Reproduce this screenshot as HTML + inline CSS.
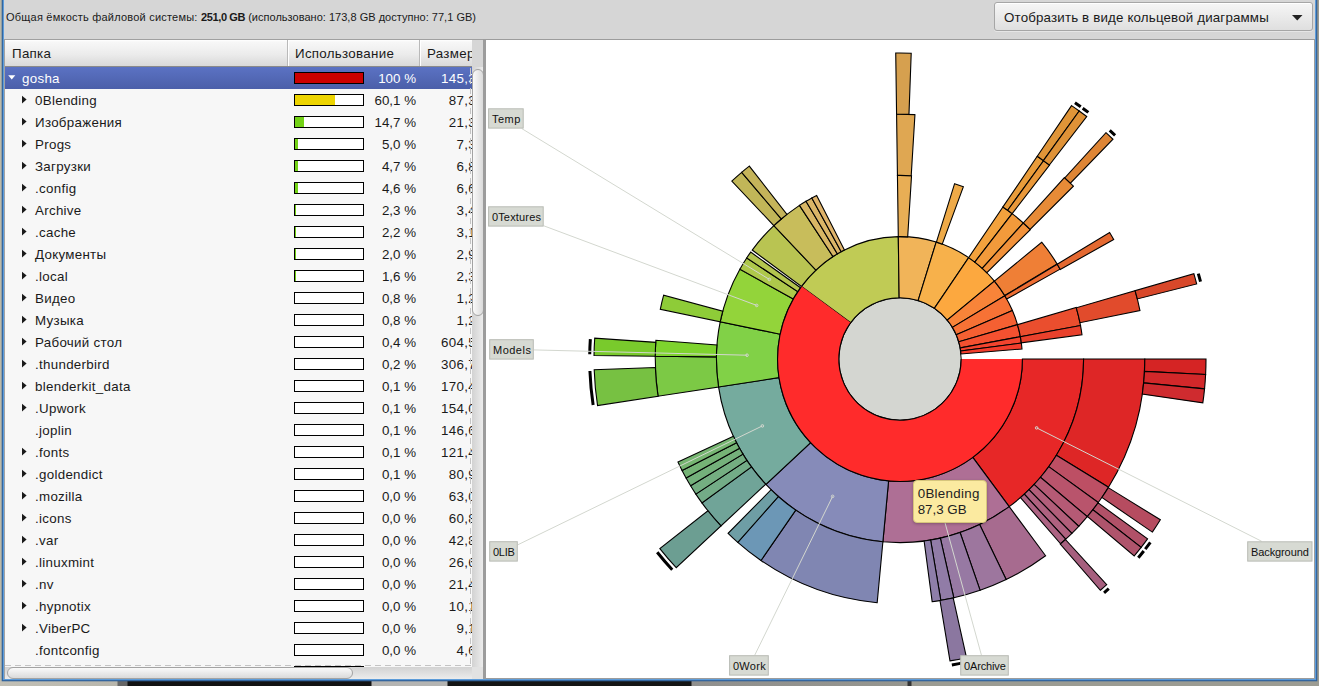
<!DOCTYPE html>
<html><head><meta charset="utf-8"><title>Анализатор использования дисков</title>
<style>
html,body{margin:0;padding:0}
body{width:1319px;height:686px;overflow:hidden;position:relative;background:#d6d6d6;font-family:"Liberation Sans","DejaVu Sans",sans-serif;color:#1a1a1a}
.abs{position:absolute}
#desk{left:0;top:0;width:1319px;height:686px;background:#bdbaa9}
#frame{left:4.3px;top:-3px;width:1310.7px;height:681.5px;background:#d6d6d6;box-shadow:0 0 0 1.1px #5d9cd9,0 0 0 2.3px #2f609a}
#toptxt{left:6px;top:11px;font-size:11px;letter-spacing:.07px;white-space:nowrap;line-height:13px}
#btn{left:994px;top:2px;width:317px;height:27px;border:1px solid #a6a6a6;border-radius:3px;background:linear-gradient(#f6f6f6,#dfdfdf);box-shadow:inset 0 1px 0 #fff,0 1px 0 rgba(255,255,255,.4)}
#btn span{position:absolute;left:9px;top:7px;font-size:13.33px;letter-spacing:.16px;white-space:nowrap;line-height:16px}
#tree{left:5px;top:40px;width:467px;height:627px;background:#f7f7f7;overflow:hidden}
#hdr{left:0;top:0;width:467px;height:27.3px;background:linear-gradient(#fff 0,#f7f7f7 2px,#ececec 14px,#d9d9d9 26px);border-bottom:1.3px solid #8a8a8a;box-sizing:border-box;z-index:2;font-size:13.33px;letter-spacing:.3px}
#hdr span{position:absolute;top:6px;line-height:16px;white-space:nowrap}
#hdr i{position:absolute;top:0;width:1px;height:26px;background:#b9b9b9;box-shadow:1px 0 0 #fff}
.row{position:absolute;left:0;width:467px;height:22px;font-size:13.33px;letter-spacing:.3px;line-height:22px;white-space:nowrap}
.row.sel{background:linear-gradient(#5b72c3,#4b5fa9);color:#fff}
.row .nm{position:absolute;top:1px}
.row .ar{position:absolute}
.row .bar{position:absolute;left:289px;top:5px;width:68px;height:10px;border:1px solid #000;background:#fff}
.row .bar i{position:absolute;left:0;top:0;height:10px;display:block}
.row .pc{position:absolute;right:56px;top:1px;letter-spacing:0}
.row .sz{position:absolute;right:-4px;top:1px;letter-spacing:.35px}
#vs{left:472px;top:67px;width:11.2px;height:600px;background:linear-gradient(90deg,#d2d2d2,#ececec)}
#vsl{left:472px;top:69px;width:10px;height:245px;border:1px solid #a3a3a3;border-radius:6px;background:linear-gradient(90deg,#fafafa,#dadada)}
#hs{left:5px;top:667px;width:467px;height:12px;background:linear-gradient(#d2d2d2,#ececec)}
#cor{left:472px;top:667px;width:11.2px;height:12px;background:#e2e2e2}
#hsl{left:7px;top:667px;width:344px;height:10px;border:1px solid #a3a3a3;border-radius:6px;background:linear-gradient(#fafafa,#dadada)}
#chart{left:483.2px;top:39px;width:831.8px;height:639.5px;background:#9c9c9c}
#chart i{position:absolute;left:2.5px;top:1px;right:1px;bottom:1px;background:#fff}
svg text{font-family:"Liberation Sans","DejaVu Sans",sans-serif;font-size:11px;fill:#111}
#tip{left:912.7px;top:479.5px;width:72px;height:41px;background:#fbeaa0;border:1px solid #d6c57c;border-radius:4px;font-size:13.33px;line-height:16px;letter-spacing:.3px;box-shadow:0 1px 3px rgba(0,0,0,.25)}
#tip div{position:absolute;left:4px;white-space:nowrap;color:#222}
</style></head><body>
<div id="desk" class="abs"></div>
<div class="abs" style="left:1317px;top:0;width:2px;height:686px;background:#9c9a8e"></div>
<div class="abs" style="left:0;top:681px;width:1319px;height:5px;background:linear-gradient(90deg,#c2c0b6 0,#b8b6ac 117px,#666 118px,#666 127px,#121212 128px,#121212 371px,#b4b4b2 372px,#b4b4b2 447px,#151515 448px,#151515 691px,#90908e 692px,#96968f 907px,#333 908px,#333 911px,#9c9c93 912px)"></div>
<div id="frame" class="abs"></div>
<div id="toptxt" class="abs"><span style="letter-spacing:.22px">Общая ёмкость файловой системы: </span><b style="letter-spacing:-.36px">251,0 GB</b><span style="letter-spacing:.02px"> (использовано: 173,8 GB доступно: 77,1 GB)</span></div>
<div id="btn" class="abs"><span>Отобразить в виде кольцевой диаграммы</span><svg class="abs" style="left:297px;top:12px" width="11" height="6"><path d="M0 0H10.5L5.25 5.5Z" fill="#222"/></svg></div>
<div class="abs" style="left:4.3px;top:39px;width:1310.7px;height:1px;background:#a0a0a0"></div>
<div class="abs" style="left:4.3px;top:40px;width:.8px;height:638.5px;background:#a2a2a2"></div>
<div id="tree" class="abs">
<div id="hdr" class="abs"><span style="left:7px">Папка</span><i style="left:282px"></i><span style="left:290px">Использование</span><i style="left:414px"></i><span style="left:422px">Размер</span></div>
<div class="row sel" style="top:27px"><svg class="ar" style="left:3px;top:8px" width="8" height="5"><path d="M0.2 0.3H7.3L3.75 4.4Z" fill="#fff"/></svg><span class="nm" style="left:17px">gosha</span><div class="bar"><i style="width:68px;background:#cc0000"></i></div><span class="pc">100 %</span><span class="sz">145,3</span></div>
<div class="row" style="top:49px"><svg class="ar" style="left:17px;top:6px" width="6" height="9"><path d="M0 0.7V8.4L4.6 4.55Z" fill="#1a1a1a"/></svg><span class="nm" style="left:30px">0Blending</span><div class="bar"><i style="width:40px;background:#edd400"></i></div><span class="pc">60,1 %</span><span class="sz">87,3</span></div>
<div class="row" style="top:71px"><svg class="ar" style="left:17px;top:6px" width="6" height="9"><path d="M0 0.7V8.4L4.6 4.55Z" fill="#1a1a1a"/></svg><span class="nm" style="left:30px">Изображения</span><div class="bar"><i style="width:9px;background:#73d216"></i></div><span class="pc">14,7 %</span><span class="sz">21,3</span></div>
<div class="row" style="top:93px"><svg class="ar" style="left:17px;top:6px" width="6" height="9"><path d="M0 0.7V8.4L4.6 4.55Z" fill="#1a1a1a"/></svg><span class="nm" style="left:30px">Progs</span><div class="bar"><i style="width:3px;background:#73d216"></i></div><span class="pc">5,0 %</span><span class="sz">7,3</span></div>
<div class="row" style="top:115px"><svg class="ar" style="left:17px;top:6px" width="6" height="9"><path d="M0 0.7V8.4L4.6 4.55Z" fill="#1a1a1a"/></svg><span class="nm" style="left:30px">Загрузки</span><div class="bar"><i style="width:3px;background:#73d216"></i></div><span class="pc">4,7 %</span><span class="sz">6,8</span></div>
<div class="row" style="top:137px"><svg class="ar" style="left:17px;top:6px" width="6" height="9"><path d="M0 0.7V8.4L4.6 4.55Z" fill="#1a1a1a"/></svg><span class="nm" style="left:30px">.config</span><div class="bar"><i style="width:3px;background:#73d216"></i></div><span class="pc">4,6 %</span><span class="sz">6,6</span></div>
<div class="row" style="top:159px"><svg class="ar" style="left:17px;top:6px" width="6" height="9"><path d="M0 0.7V8.4L4.6 4.55Z" fill="#1a1a1a"/></svg><span class="nm" style="left:30px">Archive</span><div class="bar"><i style="width:1px;background:#73d216"></i></div><span class="pc">2,3 %</span><span class="sz">3,4</span></div>
<div class="row" style="top:181px"><svg class="ar" style="left:17px;top:6px" width="6" height="9"><path d="M0 0.7V8.4L4.6 4.55Z" fill="#1a1a1a"/></svg><span class="nm" style="left:30px">.cache</span><div class="bar"><i style="width:1px;background:#73d216"></i></div><span class="pc">2,2 %</span><span class="sz">3,1</span></div>
<div class="row" style="top:203px"><svg class="ar" style="left:17px;top:6px" width="6" height="9"><path d="M0 0.7V8.4L4.6 4.55Z" fill="#1a1a1a"/></svg><span class="nm" style="left:30px">Документы</span><div class="bar"><i style="width:1px;background:#73d216"></i></div><span class="pc">2,0 %</span><span class="sz">2,9</span></div>
<div class="row" style="top:225px"><svg class="ar" style="left:17px;top:6px" width="6" height="9"><path d="M0 0.7V8.4L4.6 4.55Z" fill="#1a1a1a"/></svg><span class="nm" style="left:30px">.local</span><div class="bar"><i style="width:1px;background:#73d216"></i></div><span class="pc">1,6 %</span><span class="sz">2,3</span></div>
<div class="row" style="top:247px"><svg class="ar" style="left:17px;top:6px" width="6" height="9"><path d="M0 0.7V8.4L4.6 4.55Z" fill="#1a1a1a"/></svg><span class="nm" style="left:30px">Видео</span><div class="bar"><i style="width:0px;background:#73d216"></i></div><span class="pc">0,8 %</span><span class="sz">1,2</span></div>
<div class="row" style="top:269px"><svg class="ar" style="left:17px;top:6px" width="6" height="9"><path d="M0 0.7V8.4L4.6 4.55Z" fill="#1a1a1a"/></svg><span class="nm" style="left:30px">Музыка</span><div class="bar"><i style="width:0px;background:#73d216"></i></div><span class="pc">0,8 %</span><span class="sz">1,2</span></div>
<div class="row" style="top:291px"><svg class="ar" style="left:17px;top:6px" width="6" height="9"><path d="M0 0.7V8.4L4.6 4.55Z" fill="#1a1a1a"/></svg><span class="nm" style="left:30px">Рабочий стол</span><div class="bar"><i style="width:0px;background:#73d216"></i></div><span class="pc">0,4 %</span><span class="sz">604,5</span></div>
<div class="row" style="top:313px"><svg class="ar" style="left:17px;top:6px" width="6" height="9"><path d="M0 0.7V8.4L4.6 4.55Z" fill="#1a1a1a"/></svg><span class="nm" style="left:30px">.thunderbird</span><div class="bar"><i style="width:0px;background:#73d216"></i></div><span class="pc">0,2 %</span><span class="sz">306,7</span></div>
<div class="row" style="top:335px"><svg class="ar" style="left:17px;top:6px" width="6" height="9"><path d="M0 0.7V8.4L4.6 4.55Z" fill="#1a1a1a"/></svg><span class="nm" style="left:30px">blenderkit_data</span><div class="bar"><i style="width:0px;background:#73d216"></i></div><span class="pc">0,1 %</span><span class="sz">170,4</span></div>
<div class="row" style="top:357px"><svg class="ar" style="left:17px;top:6px" width="6" height="9"><path d="M0 0.7V8.4L4.6 4.55Z" fill="#1a1a1a"/></svg><span class="nm" style="left:30px">.Upwork</span><div class="bar"><i style="width:0px;background:#73d216"></i></div><span class="pc">0,1 %</span><span class="sz">154,0</span></div>
<div class="row" style="top:379px"><span class="nm" style="left:30px">.joplin</span><div class="bar"><i style="width:0px;background:#73d216"></i></div><span class="pc">0,1 %</span><span class="sz">146,6</span></div>
<div class="row" style="top:401px"><svg class="ar" style="left:17px;top:6px" width="6" height="9"><path d="M0 0.7V8.4L4.6 4.55Z" fill="#1a1a1a"/></svg><span class="nm" style="left:30px">.fonts</span><div class="bar"><i style="width:0px;background:#73d216"></i></div><span class="pc">0,1 %</span><span class="sz">121,4</span></div>
<div class="row" style="top:423px"><svg class="ar" style="left:17px;top:6px" width="6" height="9"><path d="M0 0.7V8.4L4.6 4.55Z" fill="#1a1a1a"/></svg><span class="nm" style="left:30px">.goldendict</span><div class="bar"><i style="width:0px;background:#73d216"></i></div><span class="pc">0,1 %</span><span class="sz">80,9</span></div>
<div class="row" style="top:445px"><svg class="ar" style="left:17px;top:6px" width="6" height="9"><path d="M0 0.7V8.4L4.6 4.55Z" fill="#1a1a1a"/></svg><span class="nm" style="left:30px">.mozilla</span><div class="bar"><i style="width:0px;background:#73d216"></i></div><span class="pc">0,0 %</span><span class="sz">63,0</span></div>
<div class="row" style="top:467px"><svg class="ar" style="left:17px;top:6px" width="6" height="9"><path d="M0 0.7V8.4L4.6 4.55Z" fill="#1a1a1a"/></svg><span class="nm" style="left:30px">.icons</span><div class="bar"><i style="width:0px;background:#73d216"></i></div><span class="pc">0,0 %</span><span class="sz">60,8</span></div>
<div class="row" style="top:489px"><svg class="ar" style="left:17px;top:6px" width="6" height="9"><path d="M0 0.7V8.4L4.6 4.55Z" fill="#1a1a1a"/></svg><span class="nm" style="left:30px">.var</span><div class="bar"><i style="width:0px;background:#73d216"></i></div><span class="pc">0,0 %</span><span class="sz">42,8</span></div>
<div class="row" style="top:511px"><svg class="ar" style="left:17px;top:6px" width="6" height="9"><path d="M0 0.7V8.4L4.6 4.55Z" fill="#1a1a1a"/></svg><span class="nm" style="left:30px">.linuxmint</span><div class="bar"><i style="width:0px;background:#73d216"></i></div><span class="pc">0,0 %</span><span class="sz">26,6</span></div>
<div class="row" style="top:533px"><svg class="ar" style="left:17px;top:6px" width="6" height="9"><path d="M0 0.7V8.4L4.6 4.55Z" fill="#1a1a1a"/></svg><span class="nm" style="left:30px">.nv</span><div class="bar"><i style="width:0px;background:#73d216"></i></div><span class="pc">0,0 %</span><span class="sz">21,4</span></div>
<div class="row" style="top:555px"><svg class="ar" style="left:17px;top:6px" width="6" height="9"><path d="M0 0.7V8.4L4.6 4.55Z" fill="#1a1a1a"/></svg><span class="nm" style="left:30px">.hypnotix</span><div class="bar"><i style="width:0px;background:#73d216"></i></div><span class="pc">0,0 %</span><span class="sz">10,1</span></div>
<div class="row" style="top:577px"><svg class="ar" style="left:17px;top:6px" width="6" height="9"><path d="M0 0.7V8.4L4.6 4.55Z" fill="#1a1a1a"/></svg><span class="nm" style="left:30px">.ViberPC</span><div class="bar"><i style="width:0px;background:#73d216"></i></div><span class="pc">0,0 %</span><span class="sz">9,1</span></div>
<div class="row" style="top:599px"><span class="nm" style="left:30px">.fontconfig</span><div class="bar"><i style="width:0px;background:#73d216"></i></div><span class="pc">0,0 %</span><span class="sz">4,6</span></div>
<div class="row" style="top:621px"><div class="bar"></div></div>
</div>
<div class="abs" style="left:5px;top:665px;width:466px;height:1px;background:repeating-linear-gradient(90deg,#c4c4c4 0,#c4c4c4 6px,transparent 6px,transparent 10px)"></div>
<div class="abs" style="left:470px;top:68px;width:1px;height:598px;background:repeating-linear-gradient(180deg,#c4c4c4 0,#c4c4c4 6px,transparent 6px,transparent 10px)"></div>
<div id="vs" class="abs"></div><div id="vsl" class="abs"></div>
<div id="hs" class="abs"></div><div id="cor" class="abs"></div><div id="hsl" class="abs"></div>
<div id="chart" class="abs"><i></i></div>
<svg class="abs" style="left:0;top:0" width="1319" height="686" viewBox="0 0 1319 686">
<circle cx="900.0" cy="359.0" r="61.2" fill="#d4d6d1" stroke="#000" stroke-width="1"/>
<g stroke="#000" stroke-width="1.1" stroke-linejoin="miter"><path d="M850.74 322.68A61.20 61.20 0 0 1 899.15 297.81L898.29 236.61A122.40 122.40 0 0 0 801.48 286.37Z" fill="#c0cb55"/><path d="M899.15 297.81A61.20 61.20 0 0 1 918.10 300.54L936.19 242.07A122.40 122.40 0 0 0 898.29 236.61Z" fill="#f1b459"/><path d="M918.10 300.54A61.20 61.20 0 0 1 934.31 308.32L968.62 257.65A122.40 122.40 0 0 0 936.19 242.07Z" fill="#f7b14b"/><path d="M934.31 308.32A61.20 61.20 0 0 1 947.22 320.07L994.45 281.14A122.40 122.40 0 0 0 968.62 257.65Z" fill="#fca83f"/><path d="M947.22 320.07A61.20 61.20 0 0 1 952.40 327.39L1004.81 295.78A122.40 122.40 0 0 0 994.45 281.14Z" fill="#f88439"/><path d="M952.40 327.39A61.20 61.20 0 0 1 956.21 334.79L1012.42 310.59A122.40 122.40 0 0 0 1004.81 295.78Z" fill="#f77235"/><path d="M956.21 334.79A61.20 61.20 0 0 1 958.74 341.82L1017.48 324.65A122.40 122.40 0 0 0 1012.42 310.59Z" fill="#f56032"/><path d="M958.74 341.82A61.20 61.20 0 0 1 960.18 347.85L1020.35 336.69A122.40 122.40 0 0 0 1017.48 324.65Z" fill="#f45130"/><path d="M960.18 347.85A61.20 61.20 0 0 1 960.68 351.01L1021.35 343.02A122.40 122.40 0 0 0 1020.35 336.69Z" fill="#f2442e"/><path d="M960.68 351.01A61.20 61.20 0 0 1 960.99 353.99L1021.99 348.97A122.40 122.40 0 0 0 1021.35 343.02Z" fill="#f23d2c"/><path d="M1022.40 359.00A122.40 122.40 0 0 1 972.81 457.39L1009.21 506.59A183.60 183.60 0 0 0 1083.60 359.00Z" fill="#e72727"/><path d="M972.81 457.39A122.40 122.40 0 0 1 888.59 480.87L882.88 541.80A183.60 183.60 0 0 0 1009.21 506.59Z" fill="#ae6f95"/><path d="M888.59 480.87A122.40 122.40 0 0 1 810.63 442.63L765.94 484.45A183.60 183.60 0 0 0 882.88 541.80Z" fill="#868bb9"/><path d="M810.63 442.63A122.40 122.40 0 0 1 779.02 377.62L718.54 386.93A183.60 183.60 0 0 0 765.94 484.45Z" fill="#75ab9e"/><path d="M779.02 377.62A122.40 122.40 0 0 1 780.14 334.18L720.21 321.77A183.60 183.60 0 0 0 718.54 386.93Z" fill="#81d147"/><path d="M780.14 334.18A122.40 122.40 0 0 1 793.26 299.10L739.89 269.15A183.60 183.60 0 0 0 720.21 321.77Z" fill="#93d43a"/><path d="M793.26 299.10A122.40 122.40 0 0 1 797.81 291.62L746.72 257.93A183.60 183.60 0 0 0 739.89 269.15Z" fill="#aec84b"/><path d="M797.81 291.62A122.40 122.40 0 0 1 800.48 287.75L750.71 252.12A183.60 183.60 0 0 0 746.72 257.93Z" fill="#b4c64f"/><path d="M801.48 286.37A122.40 122.40 0 0 1 815.90 270.07L773.85 225.60A183.60 183.60 0 0 0 752.22 250.05Z" fill="#b9c452"/><path d="M815.90 270.07A122.40 122.40 0 0 1 832.98 256.58L799.47 205.37A183.60 183.60 0 0 0 773.85 225.60Z" fill="#c8bd5b"/><path d="M832.98 256.58A122.40 122.40 0 0 1 837.33 253.86L805.99 201.29A183.60 183.60 0 0 0 799.47 205.37Z" fill="#d8b665"/><path d="M837.33 253.86A122.40 122.40 0 0 1 841.22 251.64L811.83 197.96A183.60 183.60 0 0 0 805.99 201.29Z" fill="#dbb567"/><path d="M841.22 251.64A122.40 122.40 0 0 1 844.43 249.94L816.65 195.41A183.60 183.60 0 0 0 811.83 197.96Z" fill="#dfb36a"/><path d="M898.29 236.61A122.40 122.40 0 0 1 907.69 236.84L911.53 175.76A183.60 183.60 0 0 0 897.44 175.42Z" fill="#e8ae55"/><path d="M936.40 242.14A122.40 122.40 0 0 1 942.26 244.13L963.40 186.69A183.60 183.60 0 0 0 954.60 183.71Z" fill="#eeaa48"/><path d="M968.62 257.65A122.40 122.40 0 0 1 974.77 262.09L1012.15 213.63A183.60 183.60 0 0 0 1002.93 206.97Z" fill="#f3a23d"/><path d="M974.77 262.09A122.40 122.40 0 0 1 982.22 268.33L1023.33 222.99A183.60 183.60 0 0 0 1012.15 213.63Z" fill="#f29a3b"/><path d="M982.22 268.33A122.40 122.40 0 0 1 986.85 272.75L1030.28 229.63A183.60 183.60 0 0 0 1023.33 222.99Z" fill="#f1913a"/><path d="M994.45 281.14A122.40 122.40 0 0 1 1004.70 295.59L1057.04 263.89A183.60 183.60 0 0 0 1041.67 242.22Z" fill="#ef7f36"/><path d="M1004.81 295.78A122.40 122.40 0 0 1 1006.74 299.10L1060.11 269.15A183.60 183.60 0 0 0 1057.21 264.16Z" fill="#ed6d33"/><path d="M1017.48 324.65A122.40 122.40 0 0 1 1020.35 336.69L1080.53 325.54A183.60 183.60 0 0 0 1076.22 307.47Z" fill="#ea4e2e"/><path d="M1020.35 336.69A122.40 122.40 0 0 1 1021.32 342.81L1081.99 334.72A183.60 183.60 0 0 0 1080.53 325.54Z" fill="#e9412c"/><path d="M1083.60 359.00A183.60 183.60 0 0 1 1056.38 455.20L1108.50 487.27A244.80 244.80 0 0 0 1144.80 359.00Z" fill="#de2626"/><path d="M1056.38 455.20A183.60 183.60 0 0 1 1048.72 466.66L1098.30 502.54A244.80 244.80 0 0 0 1108.50 487.27Z" fill="#bd4f64"/><path d="M1048.72 466.66A183.60 183.60 0 0 1 1040.44 477.26L1087.25 516.68A244.80 244.80 0 0 0 1098.30 502.54Z" fill="#b9546c"/><path d="M1040.44 477.26A183.60 183.60 0 0 1 1034.06 484.45L1078.74 526.27A244.80 244.80 0 0 0 1087.25 516.68Z" fill="#b55a75"/><path d="M1034.06 484.45A183.60 183.60 0 0 1 1028.92 489.73L1071.89 533.30A244.80 244.80 0 0 0 1078.74 526.27Z" fill="#b25e7a"/><path d="M1028.92 489.73A183.60 183.60 0 0 1 1024.27 494.15L1065.70 539.20A244.80 244.80 0 0 0 1071.89 533.30Z" fill="#af617f"/><path d="M1024.27 494.15A183.60 183.60 0 0 1 1020.45 497.56L1060.60 543.75A244.80 244.80 0 0 0 1065.70 539.20Z" fill="#ad6383"/><path d="M1009.21 506.59A183.60 183.60 0 0 1 979.62 524.44L1006.16 579.58A244.80 244.80 0 0 0 1045.61 555.78Z" fill="#a76b8f"/><path d="M979.62 524.44A183.60 183.60 0 0 1 960.08 532.49L980.10 590.32A244.80 244.80 0 0 0 1006.16 579.58Z" fill="#9d769e"/><path d="M960.08 532.49A183.60 183.60 0 0 1 940.36 538.11L953.82 597.81A244.80 244.80 0 0 0 980.10 590.32Z" fill="#9779a3"/><path d="M940.36 538.11A183.60 183.60 0 0 1 930.62 540.03L940.82 600.37A244.80 244.80 0 0 0 953.82 597.81Z" fill="#917ca7"/><path d="M930.62 540.03A183.60 183.60 0 0 1 924.12 541.01L932.16 601.68A244.80 244.80 0 0 0 940.82 600.37Z" fill="#8e7ea9"/><path d="M882.88 541.80A183.60 183.60 0 0 1 795.74 510.13L760.99 560.50A244.80 244.80 0 0 0 877.17 602.73Z" fill="#8086b2"/><path d="M795.74 510.13A183.60 183.60 0 0 1 778.34 496.51L737.79 542.34A244.80 244.80 0 0 0 760.99 560.50Z" fill="#6c97b6"/><path d="M778.34 496.51A183.60 183.60 0 0 1 771.08 489.73L728.11 533.30A244.80 244.80 0 0 0 737.79 542.34Z" fill="#6e9ea5"/><path d="M765.72 484.21A183.60 183.60 0 0 1 751.46 466.92L701.95 502.89A244.80 244.80 0 0 0 720.96 525.95Z" fill="#70a498"/><path d="M751.46 466.92A183.60 183.60 0 0 1 746.90 460.34L695.86 494.11A244.80 244.80 0 0 0 701.95 502.89Z" fill="#73ac87"/><path d="M746.90 460.34A183.60 183.60 0 0 1 742.96 454.11L690.61 485.81A244.80 244.80 0 0 0 695.86 494.11Z" fill="#74ae81"/><path d="M742.96 454.11A183.60 183.60 0 0 1 739.58 448.29L686.10 478.05A244.80 244.80 0 0 0 690.61 485.81Z" fill="#74b17b"/><path d="M739.58 448.29A183.60 183.60 0 0 1 736.56 442.64L682.08 470.52A244.80 244.80 0 0 0 686.10 478.05Z" fill="#75b376"/><path d="M736.56 442.64A183.60 183.60 0 0 1 733.47 436.30L677.96 462.07A244.80 244.80 0 0 0 682.08 470.52Z" fill="#76b571"/><path d="M718.54 386.93A183.60 183.60 0 0 1 716.41 356.92L655.22 356.22A244.80 244.80 0 0 0 658.05 396.24Z" fill="#7cc945"/><path d="M716.41 356.92A183.60 183.60 0 0 1 716.94 344.91L655.92 340.22A244.80 244.80 0 0 0 655.22 356.22Z" fill="#7ed32e"/><path d="M720.21 321.77A183.60 183.60 0 0 1 722.74 311.17L663.65 295.23A244.80 244.80 0 0 0 660.29 309.36Z" fill="#8ecc38"/><path d="M773.85 225.60A183.60 183.60 0 0 1 781.25 218.97L741.67 172.30A244.80 244.80 0 0 0 731.80 181.13Z" fill="#c1b658"/><path d="M781.25 218.97A183.60 183.60 0 0 1 786.96 214.32L749.29 166.09A244.80 244.80 0 0 0 741.67 172.30Z" fill="#c5b45a"/><path d="M897.44 175.42A183.60 183.60 0 0 1 911.21 175.74L914.94 114.66A244.80 244.80 0 0 0 896.58 114.22Z" fill="#dfa752"/><path d="M1002.93 206.97A183.60 183.60 0 0 1 1007.66 210.28L1043.54 160.70A244.80 244.80 0 0 0 1037.24 156.29Z" fill="#e99c3a"/><path d="M1007.66 210.28A183.60 183.60 0 0 1 1012.15 213.63L1049.53 165.18A244.80 244.80 0 0 0 1043.54 160.70Z" fill="#e9983a"/><path d="M1023.33 222.99A183.60 183.60 0 0 1 1030.05 229.40L1073.40 186.20A244.80 244.80 0 0 0 1064.44 177.65Z" fill="#e78b37"/><path d="M1057.21 264.16A183.60 183.60 0 0 1 1060.27 269.43L1113.69 239.57A244.80 244.80 0 0 0 1109.61 232.55Z" fill="#e46931"/><path d="M1076.31 307.78A183.60 183.60 0 0 1 1079.98 322.71L1139.97 310.61A244.80 244.80 0 0 0 1135.08 290.70Z" fill="#e14b2c"/><path d="M1144.80 359.00A244.80 244.80 0 0 1 1144.49 371.39L1205.61 374.48A306.00 306.00 0 0 0 1206.00 359.00Z" fill="#d52424"/><path d="M1144.49 371.39A244.80 244.80 0 0 1 1143.63 382.89L1204.54 388.86A306.00 306.00 0 0 0 1205.61 374.48Z" fill="#d2282a"/><path d="M1143.63 382.89A244.80 244.80 0 0 1 1142.27 394.13L1202.83 402.91A306.00 306.00 0 0 0 1204.54 388.86Z" fill="#cf2b2f"/><path d="M1108.28 487.64A244.80 244.80 0 0 1 1101.87 497.48L1152.33 532.10A306.00 306.00 0 0 0 1160.35 519.79Z" fill="#b64c60"/><path d="M1098.05 502.89A244.80 244.80 0 0 1 1092.91 509.71L1141.13 547.39A306.00 306.00 0 0 0 1147.56 538.86Z" fill="#b15168"/><path d="M1092.91 509.71A244.80 244.80 0 0 1 1087.39 516.52L1134.24 555.90A306.00 306.00 0 0 0 1141.13 547.39Z" fill="#af546c"/><path d="M1065.38 539.49A244.80 244.80 0 0 1 1060.28 544.03L1100.35 590.29A306.00 306.00 0 0 0 1106.73 584.61Z" fill="#a65f7e"/><path d="M953.19 597.95A244.80 244.80 0 0 1 939.98 600.51L949.98 660.89A306.00 306.00 0 0 0 966.49 657.69Z" fill="#8b77a0"/><path d="M720.96 525.95A244.80 244.80 0 0 1 707.89 510.72L659.86 548.65A306.00 306.00 0 0 0 676.21 567.69Z" fill="#6c9e92"/><path d="M658.05 396.24A244.80 244.80 0 0 1 655.35 367.54L594.19 369.68A306.00 306.00 0 0 0 597.56 405.55Z" fill="#77c142"/><path d="M655.22 356.22A244.80 244.80 0 0 1 655.77 342.35L594.71 338.19A306.00 306.00 0 0 0 594.02 355.53Z" fill="#79ca2c"/><path d="M896.58 114.22A244.80 244.80 0 0 1 908.97 114.36L911.21 53.21A306.00 306.00 0 0 0 895.73 53.03Z" fill="#d6a04f"/><path d="M1037.24 156.29A244.80 244.80 0 0 1 1043.37 160.58L1079.21 110.97A306.00 306.00 0 0 0 1071.56 105.61Z" fill="#e09538"/><path d="M1043.37 160.58A244.80 244.80 0 0 1 1049.36 165.05L1086.70 116.56A306.00 306.00 0 0 0 1079.21 110.97Z" fill="#df9237"/><path d="M1064.75 177.94A244.80 244.80 0 0 1 1070.36 183.20L1112.95 139.25A306.00 306.00 0 0 0 1105.94 132.67Z" fill="#de8535"/><path d="M1135.08 290.70A244.80 244.80 0 0 1 1137.32 298.95L1196.65 283.94A306.00 306.00 0 0 0 1193.85 273.63Z" fill="#d8482a"/></g>
<path d="M961.20 359.00A61.20 61.20 0 1 1 850.74 322.68L801.48 286.37A122.40 122.40 0 1 0 1022.40 359.00Z" fill="#ff2b2b"/>
<g stroke="#000" stroke-width="1.1" fill="none"><path d="M961.20 359.00A61.20 61.20 0 1 1 850.74 322.68"/><path d="M1022.40 359.00A122.40 122.40 0 1 1 801.48 286.37"/></g>
<g stroke="#000" stroke-width="3" fill="none"><path d="M1150.34 542.35A310.30 310.30 0 0 1 1145.25 549.10"/><path d="M1143.78 550.98A310.30 310.30 0 0 1 1138.29 557.75"/><path d="M1108.76 588.58A310.30 310.30 0 0 1 1104.07 592.76"/><path d="M966.26 662.14A310.30 310.30 0 0 1 951.86 664.94"/><path d="M672.25 569.75A310.30 310.30 0 0 1 657.22 552.25"/><path d="M593.13 405.03A310.30 310.30 0 0 1 589.93 371.02"/><path d="M589.74 354.29A310.30 310.30 0 0 1 590.34 339.08"/><path d="M1074.95 102.72A310.30 310.30 0 0 1 1080.76 106.79"/><path d="M1082.70 108.19A310.30 310.30 0 0 1 1088.38 112.43"/><path d="M1109.72 130.30A310.30 310.30 0 0 1 1115.08 135.34"/><path d="M1198.31 273.57A310.30 310.30 0 0 1 1200.52 281.73"/></g>
<g stroke="#d3d7cf" stroke-width="1" fill="none"><path d="M769.34 279.40L521.80 128.60"/><circle cx="769.34" cy="279.40" r="1.3"/><path d="M756.69 305.42L543.70 225.78"/><circle cx="756.69" cy="305.42" r="1.3"/><path d="M747.05 355.21L533.80 349.92"/><circle cx="747.05" cy="355.21" r="1.3"/><path d="M762.40 425.89L517.80 544.79"/><circle cx="762.40" cy="425.89" r="1.3"/><path d="M832.63 496.37L754.73 655.20"/><circle cx="832.63" cy="496.37" r="1.3"/><path d="M940.57 506.52L981.45 655.20"/><circle cx="940.57" cy="506.52" r="1.3"/><path d="M1036.63 427.87L1261.68 541.30"/><circle cx="1036.63" cy="427.87" r="1.3"/></g>
<rect x="488.6" y="108.8" width="34.6" height="19.3" fill="#d7dad3" stroke="#b8bbb4" stroke-width="1"/>
<text x="491.9" y="123.0" textLength="28.5" lengthAdjust="spacing">Temp</text>
<rect x="488.6" y="206.8" width="54.6" height="19.3" fill="#d7dad3" stroke="#b8bbb4" stroke-width="1"/>
<text x="491.9" y="221.0" textLength="49.1" lengthAdjust="spacing">0Textures</text>
<rect x="489.7" y="339.7" width="43.6" height="19.4" fill="#d7dad3" stroke="#b8bbb4" stroke-width="1"/>
<text x="493.0" y="353.9" textLength="37.9" lengthAdjust="spacing">Models</text>
<rect x="489.7" y="541.7" width="27.6" height="19.4" fill="#d7dad3" stroke="#b8bbb4" stroke-width="1"/>
<text x="493.0" y="555.9" textLength="21.9" lengthAdjust="spacing">0LIB</text>
<rect x="729.6" y="655.7" width="38.7" height="19.4" fill="#d7dad3" stroke="#b8bbb4" stroke-width="1"/>
<text x="732.9" y="669.9" textLength="32.9" lengthAdjust="spacing">0Work</text>
<rect x="960.7" y="655.7" width="47.6" height="19.4" fill="#d7dad3" stroke="#b8bbb4" stroke-width="1"/>
<text x="964.0" y="669.9" textLength="41.8" lengthAdjust="spacing">0Archive</text>
<rect x="1247.7" y="541.8" width="64.3" height="19.3" fill="#d7dad3" stroke="#b8bbb4" stroke-width="1"/>
<text x="1251.0" y="556.0" textLength="57.8" lengthAdjust="spacing">Background</text>
</svg>
<div id="tip" class="abs"><div style="top:5px">0Blending</div><div style="top:21px;letter-spacing:0">87,3 GB</div></div>
</body></html>
